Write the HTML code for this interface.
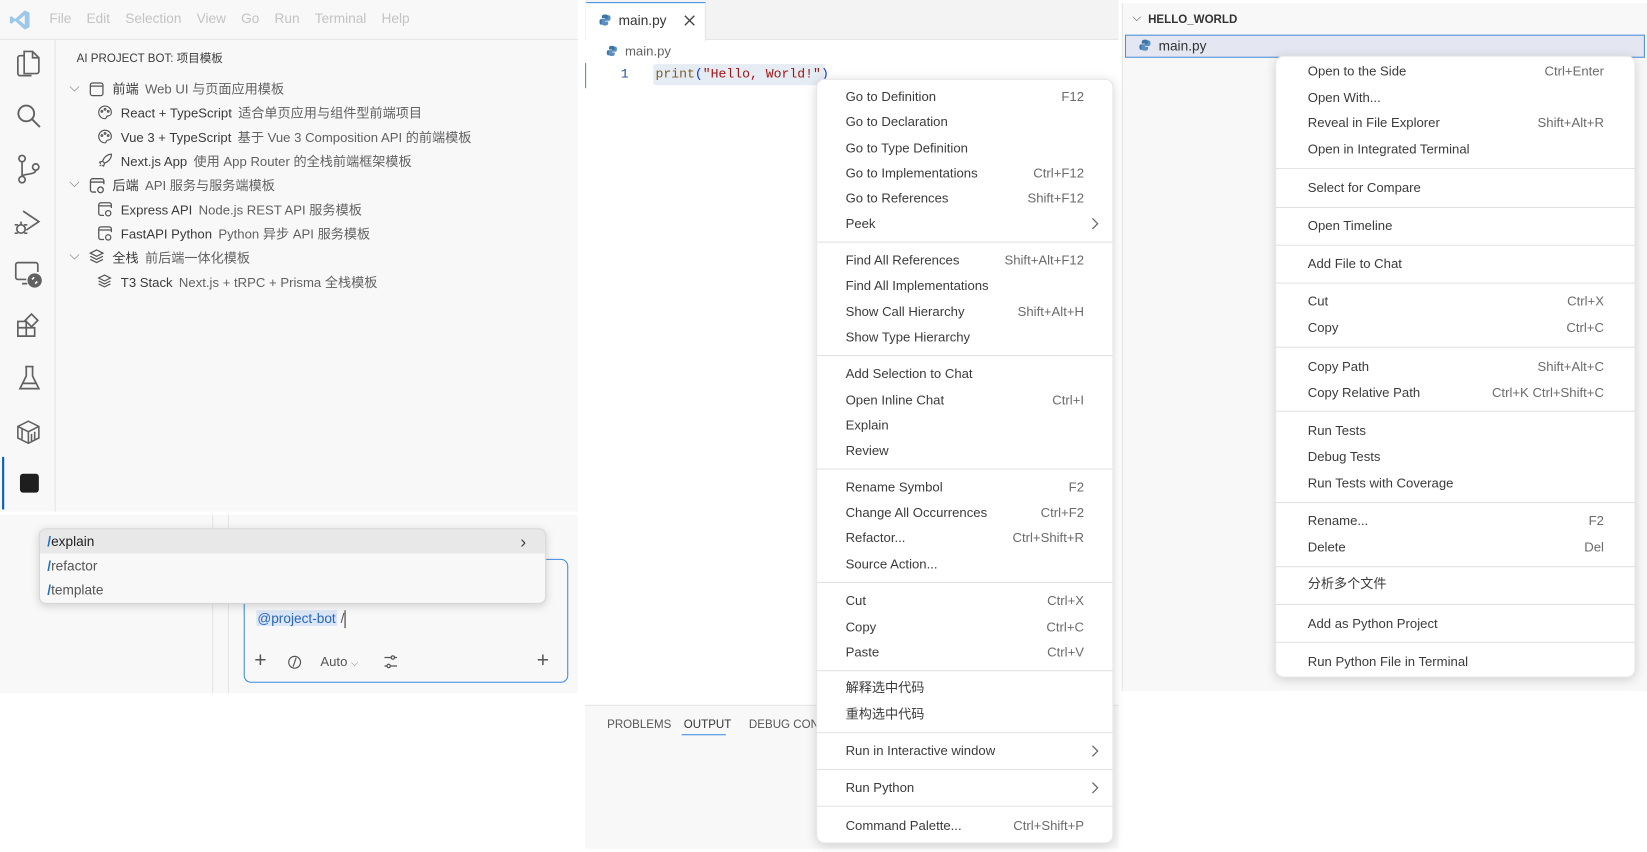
<!DOCTYPE html>
<html><head><meta charset="utf-8"><style>
*{margin:0;padding:0;box-sizing:border-box}
html,body{width:1647px;height:852px;overflow:hidden;background:#fff}
#root{position:absolute;left:0;top:0;width:1568px;height:811px;transform:scale(1.0504);transform-origin:0 0;font-family:"Liberation Sans","Noto Sans CJK SC",sans-serif;font-size:12.5px;color:#3b3b3b}
.a{position:absolute}
.mi{position:absolute;height:24px;line-height:24px;white-space:nowrap}
.sc{position:absolute;height:24px;line-height:24px;color:#6b6b6b;text-align:right;white-space:nowrap}
.sep{position:absolute;height:1px;background:#e2e2e2}
.chev{position:absolute;color:#777;font-size:13px}
svg{position:absolute}
.row{position:absolute;height:22px;line-height:22px;white-space:nowrap;color:#3b3b3b}
.row .d{color:#616161;margin-left:6px}
</style></head><body><div id="root">

<!-- Panel 1 -->
<div class="a" style="left:0;top:0;width:550px;height:487px;background:#f8f8f8"></div>
<div class="a" style="left:0;top:37px;width:550px;height:1px;background:#e5e5e5"></div>
<svg style="left:8px;top:8px" width="22" height="22" viewBox="0 0 24 24"><path d="M17 2 L22 4.5 V19.5 L17 22 L7 13 L3 16 L1.5 15 V9 L3 8 L7 11 Z M17 7 L11 12 L17 17 Z" fill="#9cc8ea"/></svg>
<div class="a" style="left:47px;top:10px;color:#c3c3c3;font-size:13px;word-spacing:0">File&nbsp;&nbsp;&nbsp;&nbsp;Edit&nbsp;&nbsp;&nbsp;&nbsp;Selection&nbsp;&nbsp;&nbsp;&nbsp;View&nbsp;&nbsp;&nbsp;&nbsp;Go&nbsp;&nbsp;&nbsp;&nbsp;Run&nbsp;&nbsp;&nbsp;&nbsp;Terminal&nbsp;&nbsp;&nbsp;&nbsp;Help</div>
<div class="a" style="left:52px;top:38px;width:1px;height:449px;background:#e5e5e5"></div>
<svg style="left:14px;top:46px" width="26" height="28" viewBox="0 0 26 28" fill="none" stroke="#616161" stroke-width="1.6"><path d="M9 3h8l6 6v13a2 2 0 0 1-2 2H9z M17 3v6h6"/><path d="M9 7H5a2 2 0 0 0-2 2v15a2 2 0 0 0 2 2h11"/></svg>
<svg style="left:14px;top:97px" width="26" height="28" viewBox="0 0 26 28" fill="none" stroke="#616161" stroke-width="1.8"><circle cx="11" cy="11" r="7.5"/><path d="M16.5 16.5L24 24"/></svg>
<svg style="left:14px;top:146px" width="26" height="30" viewBox="0 0 26 30" fill="none" stroke="#616161" stroke-width="1.6"><circle cx="7" cy="5" r="3"/><circle cx="7" cy="25" r="3"/><circle cx="20" cy="13" r="3"/><path d="M7 8v14 M20 16c0 5-13 3-13 6"/></svg>
<svg style="left:12px;top:197px" width="28" height="30" viewBox="0 0 28 30" fill="none" stroke="#616161" stroke-width="1.6"><path d="M10 4l15 10-12 8"/><circle cx="8" cy="21" r="4"/><path d="M2 17h3 M2 25h3 M11 17h3 M11 25h3 M8 14v3"/></svg>
<svg style="left:13px;top:247px" width="28" height="28" viewBox="0 0 28 28" fill="none" stroke="#616161" stroke-width="1.6"><path d="M12 19H4a2 2 0 0 1-2-2V5a2 2 0 0 1 2-2h17a2 2 0 0 1 2 2v7 M8 23h5"/><circle cx="20" cy="20" r="6" fill="#616161"/><path d="M17.5 19l2-2 M20.5 23l2-2" stroke="#fff"/></svg>
<svg style="left:15px;top:297px" width="26" height="26" viewBox="0 0 26 26" fill="none" stroke="#616161" stroke-width="1.6"><path d="M2 9h8v14H2z M10 15h8v8h-8z M2 15h8 M15 2l6 6-6 6-6-6z"/></svg>
<svg style="left:16px;top:346px" width="24" height="28" viewBox="0 0 24 28" fill="none" stroke="#616161" stroke-width="1.6"><path d="M8 3h8 M9 3v9L3 24h18L15 12V3 M5 19h14"/></svg>
<svg style="left:14px;top:397px" width="26" height="28" viewBox="0 0 26 28" fill="none" stroke="#616161" stroke-width="1.5"><path d="M3 9l10-5 10 5v11l-10 5-10-5z M3 9l10 5 10-5 M13 14v11 M7 11v10 M16 16v7 M19 14v8"/></svg>
<div class="a" style="left:2px;top:435px;width:2px;height:50px;background:#005fb8"></div>
<div class="a" style="left:19px;top:451px;width:18px;height:18px;border-radius:3px;background:#1e1e1e"></div>
<div class="a" style="left:73px;top:47px;font-size:11px;color:#3b3b3b">AI PROJECT BOT: 项目模板</div>
<div class="chev" style="left:66px;top:75px">⌵</div>
<svg style="left:84px;top:77px" width="16" height="16" viewBox="0 0 16 16" fill="none" stroke="#555" stroke-width="1.2"><rect x="2" y="2" width="12" height="12" rx="2"/><path d="M2 5h12"/></svg>
<div class="row" style="left:107px;top:74px">前端<span class="d">Web UI 与页面应用模板</span></div>
<svg style="left:92px;top:99px" width="16" height="16" viewBox="0 0 16 16" fill="none" stroke="#555" stroke-width="1.1"><path d="M8 2a6 6 0 1 0 0 12c1.5 0 1-2 2-2.5s4 .5 4-3.5A6 6 0 0 0 8 2z"/><circle cx="5" cy="7" r=".8"/><circle cx="8" cy="5" r=".8"/><circle cx="11" cy="7" r=".8"/></svg>
<div class="row" style="left:115px;top:97px">React + TypeScript<span class="d">适合单页应用与组件型前端项目</span></div>
<svg style="left:92px;top:122px" width="16" height="16" viewBox="0 0 16 16" fill="none" stroke="#555" stroke-width="1.1"><path d="M8 2a6 6 0 1 0 0 12c1.5 0 1-2 2-2.5s4 .5 4-3.5A6 6 0 0 0 8 2z"/><circle cx="5" cy="7" r=".8"/><circle cx="8" cy="5" r=".8"/><circle cx="11" cy="7" r=".8"/></svg>
<div class="row" style="left:115px;top:120px">Vue 3 + TypeScript<span class="d">基于 Vue 3 Composition API 的前端模板</span></div>
<svg style="left:93px;top:145px" width="15" height="15" viewBox="0 0 16 16" fill="none" stroke="#555" stroke-width="1.2"><path d="M14 2c-5 0-8 4-9 7l2 2c3-1 7-4 7-9z M5 9l-3 1 1 2 M7 11l-1 3-2-1 M3 13l-1 1"/></svg>
<div class="row" style="left:115px;top:143px">Next.js App<span class="d">使用 App Router 的全栈前端框架模板</span></div>
<div class="chev" style="left:66px;top:166px">⌵</div>
<svg style="left:84px;top:168px" width="17" height="17" viewBox="0 0 16 16" fill="none" stroke="#555" stroke-width="1.2"><path d="M7 14H4a2 2 0 0 1-2-2V4a2 2 0 0 1 2-2h8a2 2 0 0 1 2 2v3 M2 5h12"/><circle cx="11" cy="12" r="2.5"/></svg>
<div class="row" style="left:107px;top:166px">后端<span class="d">API 服务与服务端模板</span></div>
<svg style="left:92px;top:191px" width="16" height="16" viewBox="0 0 16 16" fill="none" stroke="#555" stroke-width="1.2"><path d="M7 14H4a2 2 0 0 1-2-2V4a2 2 0 0 1 2-2h8a2 2 0 0 1 2 2v3 M2 5h12"/><circle cx="11" cy="12" r="2.5"/></svg>
<div class="row" style="left:115px;top:189px">Express API<span class="d">Node.js REST API 服务模板</span></div>
<svg style="left:92px;top:214px" width="16" height="16" viewBox="0 0 16 16" fill="none" stroke="#555" stroke-width="1.2"><path d="M7 14H4a2 2 0 0 1-2-2V4a2 2 0 0 1 2-2h8a2 2 0 0 1 2 2v3 M2 5h12"/><circle cx="11" cy="12" r="2.5"/></svg>
<div class="row" style="left:115px;top:212px">FastAPI Python<span class="d">Python 异步 API 服务模板</span></div>
<div class="chev" style="left:66px;top:235px">⌵</div>
<svg style="left:84px;top:236px" width="16" height="16" viewBox="0 0 16 16" fill="none" stroke="#555" stroke-width="1.2"><path d="M8 2l6 3-6 3-6-3z M2 8l6 3 6-3 M2 11l6 3 6-3"/></svg>
<div class="row" style="left:107px;top:235px">全栈<span class="d">前后端一体化模板</span></div>
<svg style="left:92px;top:260px" width="15" height="15" viewBox="0 0 16 16" fill="none" stroke="#555" stroke-width="1.2"><path d="M8 2l6 3-6 3-6-3z M2 8l6 3 6-3 M2 11l6 3 6-3"/></svg>
<div class="row" style="left:115px;top:258px">T3 Stack<span class="d">Next.js + tRPC + Prisma 全栈模板</span></div>

<div class="a" style="left:0;top:490px;width:550px;height:170px;background:#f8f8f8"></div>
<div class="a" style="left:202px;top:490px;width:1px;height:170px;background:#e5e5e5"></div>
<div class="a" style="left:217px;top:490px;width:1px;height:170px;background:#e5e5e5"></div>
<div class="a" style="left:232px;top:532px;width:309px;height:118px;border:1px solid #3c8be0;border-radius:7px;background:#f8f8f8"></div>
<div class="a" style="left:244px;top:579px;height:20px;line-height:20px;font-size:13px"><span style="background:#dbe6f7;color:#2a66b8;padding:0 1px">@project-bot</span> <span style="color:#555">/</span><span style="display:inline-block;width:1px;height:17px;background:#333;vertical-align:middle"></span></div>
<div class="a" style="left:242px;top:619px;font-size:20px;color:#555;line-height:20px">+</div>
<svg style="left:273px;top:623px" width="15" height="15" viewBox="0 0 16 16" fill="none" stroke="#555" stroke-width="1.2"><circle cx="8" cy="8" r="6"/><path d="M9.5 3.5l-3 9"/></svg>
<div class="a" style="left:305px;top:623px;font-size:12.5px;color:#555">Auto <span style="font-size:9px;color:#888">⌵</span></div>
<svg style="left:364px;top:622px" width="16" height="16" viewBox="0 0 16 16" fill="none" stroke="#555" stroke-width="1.2"><path d="M2 4h12 M2 12h12"/><circle cx="10" cy="4" r="1.6" fill="#f8f8f8"/><circle cx="6" cy="12" r="1.6" fill="#f8f8f8"/></svg>
<div class="a" style="left:511px;top:619px;font-size:20px;color:#555;line-height:20px">+</div>
<div class="a" style="left:37px;top:503px;width:483px;height:72px;border-radius:7px;background:#f8f8f8;border:1px solid #d6d6d6;box-shadow:0 2px 8px rgba(0,0,0,.15);overflow:hidden">
 <div style="height:23px;background:#e8e8e8;line-height:23px;padding-left:7px;color:#222;font-size:13px"><b style="color:#1f6fd1">/</b>explain<span style="float:right;margin-right:18px;color:#444;font-size:17px">›</span></div>
 <div style="height:23px;line-height:23px;padding-left:7px;color:#555;font-size:13px"><b style="color:#1f6fd1">/</b>refactor</div>
 <div style="height:23px;line-height:23px;padding-left:7px;color:#555;font-size:13px"><b style="color:#1f6fd1">/</b>template</div>
</div>

<!-- Panel 2 -->
<div class="a" style="left:557px;top:0;width:508px;height:38px;background:#f3f3f3;border-bottom:1px solid #e5e5e5"></div>
<div class="a" style="left:558px;top:2px;width:114px;height:37px;background:#fff;border-top:1px solid #3c8be0;border-right:1px solid #e5e5e5"></div>
<svg style="left:570px;top:13px" width="12" height="12" viewBox="0 0 16 16"><path d="M8 1c-3 0-4 1-4 3v2h4v1H3c-2 0-2 2-2 4s1 3 2 3h1v-2c0-1.5 1-3 3-3h3c1.5 0 2.5-1 2.5-2.5V4c0-2-1.5-3-4.5-3z" fill="#3b76a8"/><path d="M8 15c3 0 4-1 4-3v-2H8V9h5c2 0 2-2 2-4s-1-3-2-3h-1v2c0 1.5-1 3-3 3H6c-1.5 0-2.5 1-2.5 2.5V12c0 2 1.5 3 4.5 3z" fill="#5a8fbf"/></svg>
<div class="a" style="left:589px;top:12px;font-size:13px;color:#333">main.py</div>
<svg style="left:651px;top:14px" width="11" height="11" viewBox="0 0 11 11" stroke="#444" stroke-width="1.3"><path d="M1 1l9 9M10 1l-9 9"/></svg>
<div class="a" style="left:557px;top:39px;width:508px;height:632px;background:#fff"></div>
<svg style="left:577px;top:43px" width="11" height="11" viewBox="0 0 16 16"><path d="M8 1c-3 0-4 1-4 3v2h4v1H3c-2 0-2 2-2 4s1 3 2 3h1v-2c0-1.5 1-3 3-3h3c1.5 0 2.5-1 2.5-2.5V4c0-2-1.5-3-4.5-3z" fill="#3b76a8"/><path d="M8 15c3 0 4-1 4-3v-2H8V9h5c2 0 2-2 2-4s-1-3-2-3h-1v2c0 1.5-1 3-3 3H6c-1.5 0-2.5 1-2.5 2.5V12c0 2 1.5 3 4.5 3z" fill="#5a8fbf"/></svg>
<div class="a" style="left:595px;top:42px;font-size:12.5px;color:#616161">main.py</div>
<div class="a" style="left:557px;top:60px;width:1px;height:24px;background:#3c8be0"></div>
<div class="a" style="left:591px;top:62px;font-family:'Liberation Mono',monospace;font-size:12.5px;color:#1c4f9a;line-height:18px">1</div>
<div class="a" style="left:622px;top:61px;width:163px;height:20px;background:#e6ecf3;border-radius:2px"></div>
<div class="a" style="left:624px;top:62px;font-family:'Liberation Mono',monospace;font-size:12.5px;line-height:18px;white-space:pre"><span style="color:#795e26">print</span><span style="color:#0431fa">(</span><span style="color:#a31515">"Hello, World!"</span><span style="color:#0431fa">)</span></div>
<div class="a" style="left:557px;top:671px;width:508px;height:137px;background:#f8f8f8;border-top:1px solid #e5e5e5"></div>
<div class="a" style="left:578px;top:684px;font-size:11px;color:#555">PROBLEMS</div>
<div class="a" style="left:651px;top:684px;font-size:11px;color:#333">OUTPUT</div>
<div class="a" style="left:649px;top:699px;width:42px;height:1px;background:#3c8be0"></div>
<div class="a" style="left:713px;top:684px;font-size:11px;color:#555">DEBUG CONS</div>

<!-- Menu 1 -->
<div class="a" style="left:777px;top:75px;width:283px;height:728px;background:#fff;border-radius:8px;box-shadow:0 2px 10px rgba(0,0,0,.16);border:1px solid #e8e8e8"></div>
<div class="a" style="left:777px;top:75px;width:283px;height:728px">
<div class="mi" style="left:28px;top:5px">Go to Definition</div><div class="sc" style="right:28px;top:5px">F12</div>
<div class="mi" style="left:28px;top:29px">Go to Declaration</div>
<div class="mi" style="left:28px;top:54px">Go to Type Definition</div>
<div class="mi" style="left:28px;top:78px">Go to Implementations</div><div class="sc" style="right:28px;top:78px">Ctrl+F12</div>
<div class="mi" style="left:28px;top:102px">Go to References</div><div class="sc" style="right:28px;top:102px">Shift+F12</div>
<div class="mi" style="left:28px;top:126px">Peek</div><svg style="left:261px;top:132px" width="8" height="12" viewBox="0 0 8 12" fill="none" stroke="#666" stroke-width="1.2"><path d="M2 1l5 5-5 5"/></svg>
<div class="sep" style="left:0;right:0;top:155px"></div>
<div class="mi" style="left:28px;top:161px">Find All References</div><div class="sc" style="right:28px;top:161px">Shift+Alt+F12</div>
<div class="mi" style="left:28px;top:185px">Find All Implementations</div>
<div class="mi" style="left:28px;top:210px">Show Call Hierarchy</div><div class="sc" style="right:28px;top:210px">Shift+Alt+H</div>
<div class="mi" style="left:28px;top:234px">Show Type Hierarchy</div>
<div class="sep" style="left:0;right:0;top:263px"></div>
<div class="mi" style="left:28px;top:269px">Add Selection to Chat</div>
<div class="mi" style="left:28px;top:294px">Open Inline Chat</div><div class="sc" style="right:28px;top:294px">Ctrl+I</div>
<div class="mi" style="left:28px;top:318px">Explain</div>
<div class="mi" style="left:28px;top:342px">Review</div>
<div class="sep" style="left:0;right:0;top:371px"></div>
<div class="mi" style="left:28px;top:377px">Rename Symbol</div><div class="sc" style="right:28px;top:377px">F2</div>
<div class="mi" style="left:28px;top:401px">Change All Occurrences</div><div class="sc" style="right:28px;top:401px">Ctrl+F2</div>
<div class="mi" style="left:28px;top:425px">Refactor...</div><div class="sc" style="right:28px;top:425px">Ctrl+Shift+R</div>
<div class="mi" style="left:28px;top:450px">Source Action...</div>
<div class="sep" style="left:0;right:0;top:479px"></div>
<div class="mi" style="left:28px;top:485px">Cut</div><div class="sc" style="right:28px;top:485px">Ctrl+X</div>
<div class="mi" style="left:28px;top:510px">Copy</div><div class="sc" style="right:28px;top:510px">Ctrl+C</div>
<div class="mi" style="left:28px;top:534px">Paste</div><div class="sc" style="right:28px;top:534px">Ctrl+V</div>
<div class="sep" style="left:0;right:0;top:563px"></div>
<div class="mi" style="left:28px;top:568px">解释选中代码</div>
<div class="mi" style="left:28px;top:593px">重构选中代码</div>
<div class="sep" style="left:0;right:0;top:622px"></div>
<div class="mi" style="left:28px;top:628px">Run in Interactive window</div><svg style="left:261px;top:634px" width="8" height="12" viewBox="0 0 8 12" fill="none" stroke="#666" stroke-width="1.2"><path d="M2 1l5 5-5 5"/></svg>
<div class="sep" style="left:0;right:0;top:657px"></div>
<div class="mi" style="left:28px;top:663px">Run Python</div><svg style="left:261px;top:669px" width="8" height="12" viewBox="0 0 8 12" fill="none" stroke="#666" stroke-width="1.2"><path d="M2 1l5 5-5 5"/></svg>
<div class="sep" style="left:0;right:0;top:692px"></div>
<div class="mi" style="left:28px;top:699px">Command Palette...</div><div class="sc" style="right:28px;top:699px">Ctrl+Shift+P</div>
</div>

<!-- Panel 3 -->
<div class="a" style="left:1068px;top:0;width:500px;height:658px;background:#f8f8f8;border-left:1px solid #e5e5e5"></div>
<div class="a" style="left:1068px;top:0;width:500px;height:3px;background:#fff"></div>
<div class="a" style="left:1078px;top:11px;font-size:11px;color:#555">⌵</div>
<div class="a" style="left:1093px;top:13px;font-size:11px;font-weight:bold;color:#333">HELLO_WORLD</div>
<div class="a" style="left:1071px;top:33px;width:495px;height:22px;background:#e4e6f1;border:1px solid #4b8fd8"></div>
<svg style="left:1084px;top:37px" width="12" height="12" viewBox="0 0 16 16"><path d="M8 1c-3 0-4 1-4 3v2h4v1H3c-2 0-2 2-2 4s1 3 2 3h1v-2c0-1.5 1-3 3-3h3c1.5 0 2.5-1 2.5-2.5V4c0-2-1.5-3-4.5-3z" fill="#3b76a8"/><path d="M8 15c3 0 4-1 4-3v-2H8V9h5c2 0 2-2 2-4s-1-3-2-3h-1v2c0 1.5-1 3-3 3H6c-1.5 0-2.5 1-2.5 2.5V12c0 2 1.5 3 4.5 3z" fill="#5a8fbf"/></svg>
<div class="a" style="left:1103px;top:36px;font-size:13px;color:#333">main.py</div>

<!-- Menu 2 -->
<div class="a" style="left:1214px;top:53px;width:343px;height:592px;background:#fff;border-radius:8px;box-shadow:0 2px 10px rgba(0,0,0,.16);border:1px solid #e8e8e8"></div>
<div class="a" style="left:1214px;top:53px;width:343px;height:592px">
<div class="mi" style="left:31px;top:3px">Open to the Side</div><div class="sc" style="right:30px;top:3px">Ctrl+Enter</div>
<div class="mi" style="left:31px;top:28px">Open With...</div>
<div class="mi" style="left:31px;top:52px">Reveal in File Explorer</div><div class="sc" style="right:30px;top:52px">Shift+Alt+R</div>
<div class="mi" style="left:31px;top:77px">Open in Integrated Terminal</div>
<div class="sep" style="left:0;right:0;top:107px"></div>
<div class="mi" style="left:31px;top:114px">Select for Compare</div>
<div class="sep" style="left:0;right:0;top:144px"></div>
<div class="mi" style="left:31px;top:150px">Open Timeline</div>
<div class="sep" style="left:0;right:0;top:180px"></div>
<div class="mi" style="left:31px;top:186px">Add File to Chat</div>
<div class="sep" style="left:0;right:0;top:216px"></div>
<div class="mi" style="left:31px;top:222px">Cut</div><div class="sc" style="right:30px;top:222px">Ctrl+X</div>
<div class="mi" style="left:31px;top:247px">Copy</div><div class="sc" style="right:30px;top:247px">Ctrl+C</div>
<div class="sep" style="left:0;right:0;top:277px"></div>
<div class="mi" style="left:31px;top:284px">Copy Path</div><div class="sc" style="right:30px;top:284px">Shift+Alt+C</div>
<div class="mi" style="left:31px;top:309px">Copy Relative Path</div><div class="sc" style="right:30px;top:309px">Ctrl+K Ctrl+Shift+C</div>
<div class="sep" style="left:0;right:0;top:338px"></div>
<div class="mi" style="left:31px;top:345px">Run Tests</div>
<div class="mi" style="left:31px;top:370px">Debug Tests</div>
<div class="mi" style="left:31px;top:395px">Run Tests with Coverage</div>
<div class="sep" style="left:0;right:0;top:425px"></div>
<div class="mi" style="left:31px;top:431px">Rename...</div><div class="sc" style="right:30px;top:431px">F2</div>
<div class="mi" style="left:31px;top:456px">Delete</div><div class="sc" style="right:30px;top:456px">Del</div>
<div class="sep" style="left:0;right:0;top:486px"></div>
<div class="mi" style="left:31px;top:491px">分析多个文件</div>
<div class="sep" style="left:0;right:0;top:522px"></div>
<div class="mi" style="left:31px;top:529px">Add as Python Project</div>
<div class="sep" style="left:0;right:0;top:558px"></div>
<div class="mi" style="left:31px;top:565px">Run Python File in Terminal</div>
</div>

</div></body></html>
